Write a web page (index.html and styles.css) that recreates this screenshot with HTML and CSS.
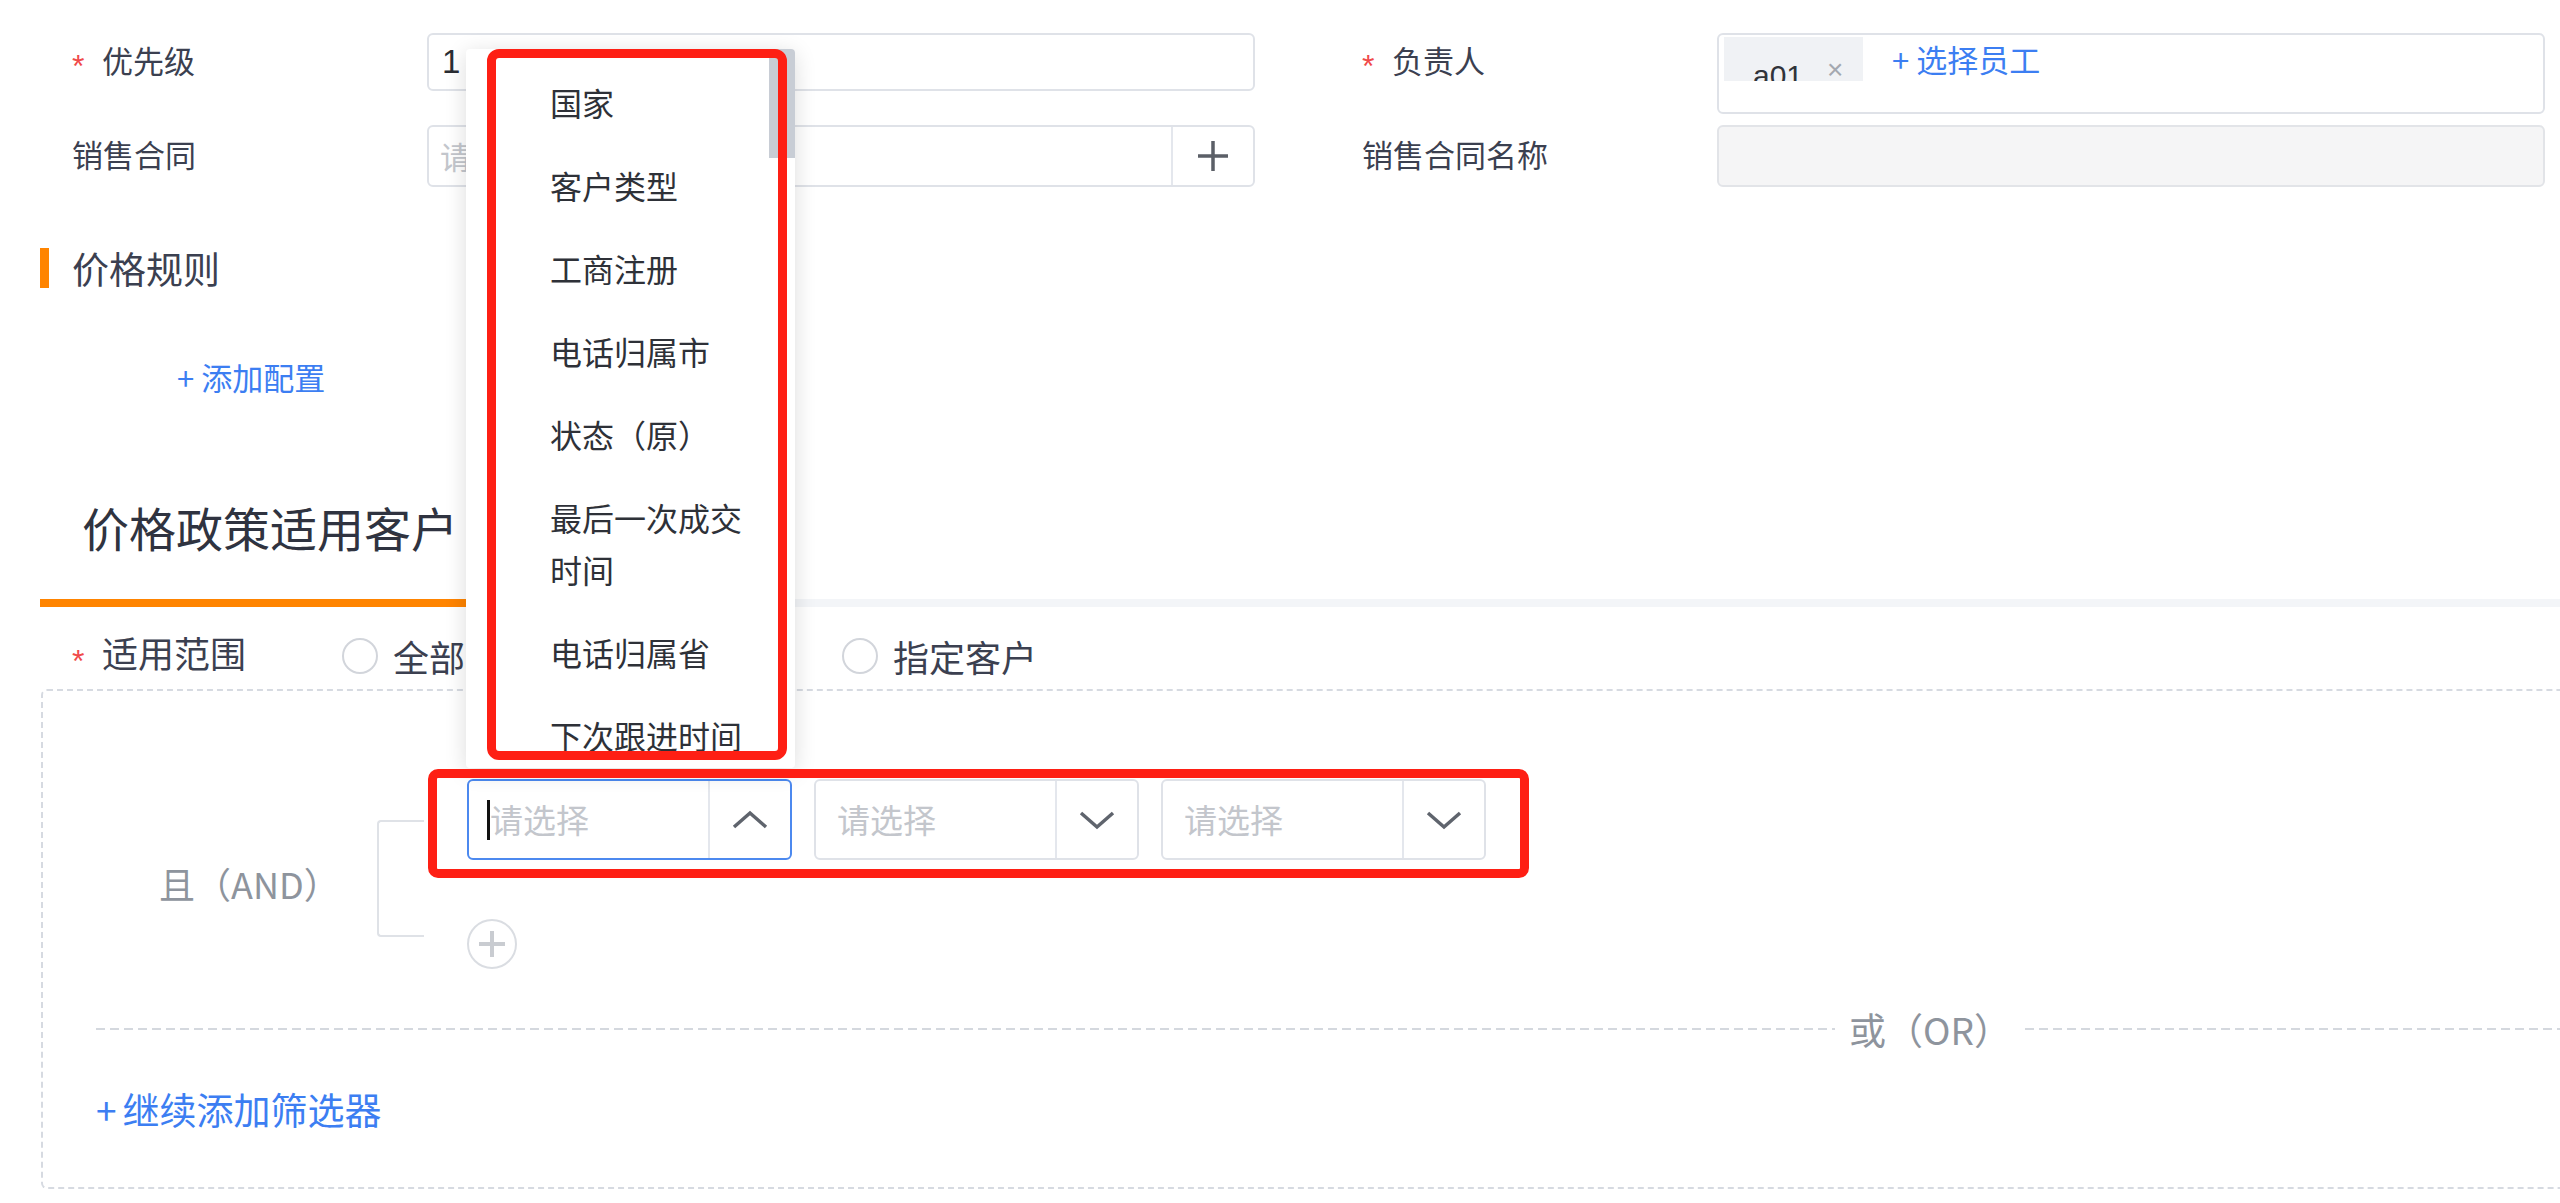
FILE: index.html
```html
<!DOCTYPE html>
<html lang="zh-CN">
<head>
<meta charset="utf-8">
<title>价格政策</title>
<link rel="stylesheet" href="styles.css">
</head>
<body>
<div class="page">
  <div class="form-row row-1">
    <div class="field">
      <label class="field-label"><span class="req">*</span>优先级</label>
      <div class="input input-text"><span class="input-value">1</span></div>
    </div>
    <div class="field">
      <label class="field-label"><span class="req">*</span>负责人</label>
      <div class="input input-tags">
        <span class="tag"><span class="tag-text">a01</span><span class="tag-close">×</span></span>
        <a class="link pick-staff">+ 选择员工</a>
      </div>
    </div>
  </div>

  <div class="form-row row-2">
    <div class="field">
      <label class="field-label">销售合同</label>
      <div class="input input-append">
        <span class="placeholder contract-ph">请选择销售合同</span>
        <span class="append-btn">
          <svg width="34" height="34" viewBox="0 0 34 34"><path d="M17 2V32M2 17H32" stroke="#5b5f67" stroke-width="3.5" fill="none"/></svg>
        </span>
      </div>
    </div>
    <div class="field">
      <label class="field-label">销售合同名称</label>
      <div class="input input-disabled"></div>
    </div>
  </div>

  <div class="section-head">价格规则</div>
  <a class="link add-config">+ 添加配置</a>

  <div class="tabs">
    <div class="tab tab-active">价格政策适用客户</div>
  </div>

  <div class="scope-row">
    <label class="scope-label"><span class="req">*</span>适用范围</label>
    <div class="radio-group">
      <span class="radio-item"><span class="radio"></span>全部</span>
      <span class="radio-item radio-item-wide"><span class="radio radio-checked"></span>按条件筛选</span>
      <span class="radio-item"><span class="radio"></span>指定客户</span>
    </div>
  </div>

  <div class="filter-box">
    <div class="group">
      <div class="and-label">且（AND）</div>
      <div class="bracket"></div>
      <div class="group-body">
        <div class="select-row">
          <div class="select select-focus">
            <div class="select-input"><span class="caret"></span><span class="placeholder">请选择</span></div>
            <div class="select-arrow">
              <svg width="36" height="20" viewBox="0 0 36 20"><polyline points="2,17 18,3 34,17" fill="none" stroke="#5f646d" stroke-width="3.5"/></svg>
            </div>
          </div>
          <div class="select">
            <div class="select-input"><span class="placeholder">请选择</span></div>
            <div class="select-arrow">
              <svg width="36" height="20" viewBox="0 0 36 20"><polyline points="2,3 18,17 34,3" fill="none" stroke="#5f646d" stroke-width="3.5"/></svg>
            </div>
          </div>
          <div class="select">
            <div class="select-input"><span class="placeholder">请选择</span></div>
            <div class="select-arrow">
              <svg width="36" height="20" viewBox="0 0 36 20"><polyline points="2,3 18,17 34,3" fill="none" stroke="#5f646d" stroke-width="3.5"/></svg>
            </div>
          </div>
        </div>
        <div class="add-circle">
          <svg width="28" height="28" viewBox="0 0 28 28"><path d="M14 1V27M1 14H27" stroke="#c9ccd1" stroke-width="4" fill="none"/></svg>
        </div>
      </div>
    </div>

    <div class="or-divider">
      <span class="or-line"></span>
      <span class="or-text">或（OR）</span>
      <span class="or-line"></span>
    </div>

    <a class="link add-filter"><span class="add-plus">+</span>继续添加筛选器</a>
  </div>

  <div class="dropdown">
    <ul class="dropdown-list">
      <li>国家</li>
      <li>客户类型</li>
      <li>工商注册</li>
      <li>电话归属市</li>
      <li>状态（原）</li>
      <li>最后一次成交时间</li>
      <li>电话归属省</li>
      <li>下次跟进时间</li>
      <li>客户来源</li>
    </ul>
    <div class="scroll-thumb"></div>
  </div>

  <div class="mark mark-dropdown"></div>
  <div class="mark mark-selects"></div>
</div>
</body>
</html>
```

FILE: styles.css
```css
html, body {
  margin: 0;
  padding: 0;
  overflow: hidden;
  background: #ffffff;
}

body {
  font-family: "Noto Sans CJK SC", "Liberation Sans", sans-serif;
  color: #3b4050;
  width: 2560px;
  height: 1203px;
}

.page {
  position: relative;
  width: 2560px;
  box-sizing: border-box;
  padding: 33px 0 0 40px;
}

a.link {
  color: #3c7ef2;
  text-decoration: none;
  cursor: pointer;
}

.req {
  display: inline-block;
  width: 30px;
  color: #f04a4a;
  font-family: "Liberation Sans", sans-serif;
  font-size: 32px;
  vertical-align: -4px;
}

/* ---------- top form ---------- */
.form-row {
  display: flex;
  align-items: flex-start;
  padding-left: 32px;
  gap: 107px;
}

.row-1 {
  height: 81px;
  margin-bottom: 11px;
}

.field {
  display: flex;
  align-items: flex-start;
}

.field-label {
  width: 355px;
  font-size: 31px;
  line-height: 54px;
  color: #3b4050;
  white-space: nowrap;
}

.row-2 .field-label {
  line-height: 58px;
}

.input {
  box-sizing: border-box;
  width: 828px;
  border: 2px solid #dfe2e8;
  border-radius: 6px;
  background: #fff;
}

.input-text {
  height: 58px;
  padding-left: 13px;
}

.input-value {
  font-family: "Liberation Sans", sans-serif;
  font-size: 33px;
  line-height: 54px;
  color: #2a2d33;
}

.input-tags {
  height: 81px;
  padding: 2px 5px;
  display: flex;
  align-items: flex-start;
}

.tag {
  box-sizing: border-box;
  width: 139px;
  height: 44px;
  background: #f0f2f5;
  overflow: hidden;
  display: flex;
  align-items: flex-start;
  padding: 23px 0 0 29px;
}

.tag-text {
  font-family: "Liberation Sans", sans-serif;
  font-size: 30px;
  line-height: 32px;
  color: #30333a;
}

.tag-close {
  font-family: "Liberation Sans", sans-serif;
  margin-left: 24px;
  margin-top: -3px;
  font-size: 28px;
  line-height: 26px;
  color: #a4a8b0;
}

.pick-staff {
  margin-left: 29px;
  font-size: 31px;
  line-height: 44px;
}

.input-append {
  height: 62px;
  display: flex;
  align-items: stretch;
}

.placeholder {
  color: #c3c6cc;
}

.contract-ph {
  flex: 1;
  padding-left: 11px;
  font-size: 31px;
  line-height: 58px;
  white-space: nowrap;
  overflow: hidden;
}

.append-btn {
  width: 80px;
  border-left: 2px solid #e4e7ed;
  display: flex;
  align-items: center;
  justify-content: center;
}

.input-disabled {
  height: 62px;
  background: #f5f5f6;
  border-color: #e2e4e8;
}

/* ---------- price rules ---------- */
.section-head {
  margin-top: 61px;
  height: 40px;
  border-left: 9px solid #ff8400;
  padding-left: 23px;
  font-size: 37px;
  line-height: 40px;
  color: #3b4050;
}

.add-config {
  display: block;
  margin-top: 69px;
  padding-left: 137px;
  font-size: 31px;
  line-height: 40px;
  height: 40px;
}

/* ---------- tabs ---------- */
.tabs {
  margin-top: 100px;
  display: flex;
  border-bottom: 8px solid #f3f5f8;
}

.tab {
  padding: 0 42px 42px;
  font-size: 47px;
  line-height: 60px;
  color: #2f3340;
  white-space: nowrap;
}

.tab-active {
  border-bottom: 8px solid #ff8400;
  margin-bottom: -8px;
}

/* ---------- scope ---------- */
.scope-row {
  margin-top: 24px;
  height: 50px;
  display: flex;
  align-items: center;
  padding-left: 32px;
}

.scope-label {
  width: 270px;
  font-size: 36px;
  line-height: 50px;
  white-space: nowrap;
  color: #3b4050;
}

.radio-group {
  display: flex;
  align-items: center;
}

.radio-item {
  display: flex;
  align-items: center;
  font-size: 36px;
  line-height: 50px;
  color: #3b4050;
  margin-right: 64px;
  white-space: nowrap;
}

.radio-item-wide {
  margin-right: 82px;
}

.radio {
  box-sizing: border-box;
  width: 36px;
  height: 36px;
  border: 2px solid #d2d5db;
  border-radius: 50%;
  margin-right: 15px;
  background: #fff;
}

.radio-checked {
  border: 11px solid #409eff;
}

/* ---------- filter box ---------- */
.filter-box {
  margin-top: 8px;
  margin-left: 1px;
  box-sizing: border-box;
  width: 3778px;
  border: 2px dashed #d6dae1;
  border-radius: 6px;
  padding: 88px 53px 58px;
}

.group {
  display: flex;
  align-items: flex-start;
}

.and-label {
  margin-left: 63px;
  margin-top: 79px;
  width: 218px;
  font-size: 36px;
  line-height: 50px;
  color: #8e949d;
  white-space: nowrap;
}

.bracket {
  box-sizing: border-box;
  margin-top: 41px;
  width: 47px;
  height: 117px;
  border: 2px solid #dfe2e7;
  border-right: none;
  border-radius: 4px 0 0 4px;
}

.group-body {
  margin-left: 43px;
}

.select-row {
  display: flex;
  gap: 22px;
}

.select {
  box-sizing: border-box;
  width: 325px;
  height: 81px;
  border: 2px solid #dfe2e8;
  border-radius: 6px;
  display: flex;
  background: #fff;
}

.select-focus {
  border-color: #4c89ef;
}

.select-input {
  flex: 1;
  display: flex;
  align-items: center;
  padding-left: 18px;
  font-size: 33px;
  line-height: 77px;
  white-space: nowrap;
}

.select-input .placeholder {
  margin-left: 3px;
}

.caret {
  width: 3px;
  height: 40px;
  background: #111;
  margin-right: -3px;
}

.select-arrow {
  width: 80px;
  border-left: 2px solid #e4e7ed;
  display: flex;
  align-items: center;
  justify-content: center;
}

.add-circle {
  box-sizing: border-box;
  margin-top: 59px;
  width: 50px;
  height: 50px;
  border: 2px solid #dadde2;
  border-radius: 50%;
  display: flex;
  align-items: center;
  justify-content: center;
}

.or-divider {
  margin-top: 40px;
  height: 40px;
  display: flex;
  align-items: center;
}

.or-line {
  flex: 1;
  height: 2px;
  background: repeating-linear-gradient(to right, #d4d8de 0 9px, transparent 9px 14px);
}

.or-text {
  margin: 0 14px;
  font-size: 37px;
  line-height: 40px;
  color: #8e949d;
  white-space: nowrap;
}

.add-filter {
  display: block;
  margin-top: 40px;
  font-size: 37px;
  line-height: 40px;
  height: 40px;
  white-space: nowrap;
}

.add-plus {
  margin-right: 6px;
}

/* ---------- dropdown overlay ---------- */
.dropdown {
  position: absolute;
  left: 466px;
  top: 49px;
  width: 329px;
  height: 719px;
  background: #fff;
  border-radius: 4px;
  box-shadow: 0 4px 22px rgba(0, 0, 0, 0.14);
  overflow: hidden;
}

.dropdown-list {
  list-style: none;
  margin: 0;
  padding: 11px 0 0;
}

.dropdown-list li {
  padding: 15.5px 40px 15.5px 84px;
  font-size: 32px;
  line-height: 52px;
  color: #2e3138;
}

.scroll-thumb {
  position: absolute;
  right: 0;
  top: 0;
  width: 26px;
  height: 109px;
  background: #c8cdd5;
}

/* ---------- red annotation marks ---------- */
.mark {
  position: absolute;
  box-sizing: border-box;
  border: 9px solid #fe1f14;
}

.mark-dropdown {
  left: 487px;
  top: 49px;
  width: 300px;
  height: 711px;
  border-radius: 12px;
}

.mark-selects {
  left: 428px;
  top: 769px;
  width: 1101px;
  height: 109px;
  border-radius: 10px;
}
```
